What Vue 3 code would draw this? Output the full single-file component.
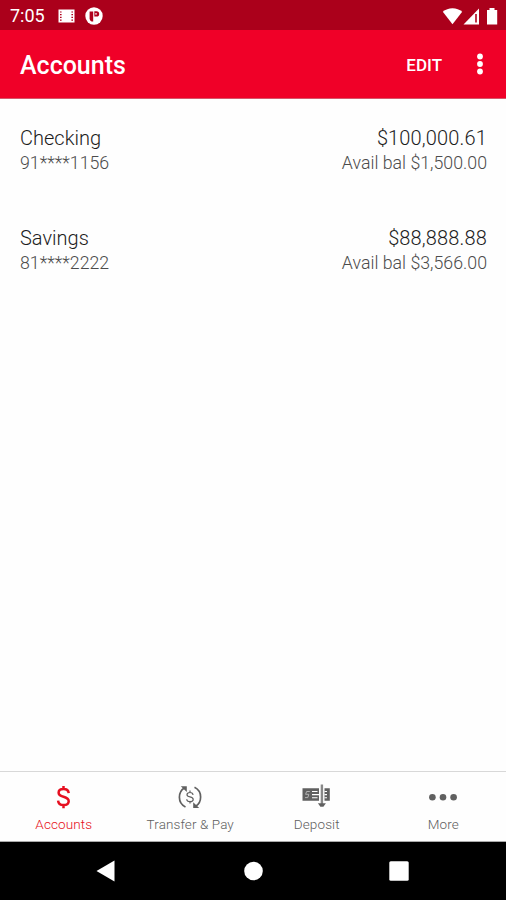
<script setup>
const accounts = [
  { name: 'Checking', number: '91****1156', balance: '$100,000.61', available: '$1,500.00' },
  { name: 'Savings', number: '81****2222', balance: '$88,888.88', available: '$3,566.00' }
]
const tabs = [
  { id: 'accounts', label: 'Accounts', active: true },
  { id: 'transfer', label: 'Transfer & Pay' },
  { id: 'deposit', label: 'Deposit' },
  { id: 'more', label: 'More' }
]
</script>

<template>
  <div class="screen">
    <div class="status">
      <span class="clock">7:05</span>
      <svg class="film" width="17" height="14" viewBox="0 0 17 14">
        <rect x="0.5" y="0.5" width="16" height="13" fill="#fff" />
        <path d="M2 3h1.600M2 5.700h1.600M2 8.400h1.600M2 11.100h1.600M13.400 3h1.600M13.400 5.700h1.600M13.400 8.400h1.600M13.400 11.100h1.600" stroke="#b0001c" stroke-width="1.200" />
      </svg>
      <svg class="badge" width="18" height="18" viewBox="0 0 18 18">
        <circle cx="9" cy="9" r="8.700" fill="#fff" />
        <path d="M4.600 4.400h3.600v10.200H6.600c-1.300-.8-2-1.800-2-3.400z" fill="#b0001c" />
        <path d="M9.300 4.200h2.200a2.700 2.700 0 0 1 0 5.400H9.300z" fill="#b0001c" />
        <circle cx="11" cy="6.900" r=".8" fill="#fff" />
      </svg>
      <svg class="signals" width="58" height="18" viewBox="0 0 58 18">
        <path d="M10.500 17.200L0.800 4.700C3.400 2.400 6.800 1.200 10.500 1.200s7.100 1.200 9.700 3.500z" fill="#fff" />
        <path d="M37 1.500V17.400H21.500z" fill="#fff" />
        <path d="M34 7v8.500" stroke="#b0001c" stroke-width="1.600" />
        <path d="M45 3h2.500V1h5V3H55.200v14.400H45z" fill="#fff" />
      </svg>
    </div>

    <header class="appbar">
      <h1>Accounts</h1>
      <button class="edit">EDIT</button>
      <svg width="6" height="22" viewBox="0 0 6 22" fill="#fff">
        <circle cx="3" cy="3.500" r="2.900" /><circle cx="3" cy="11" r="2.900" /><circle cx="3" cy="18.500" r="2.900" />
      </svg>
    </header>

    <main class="list">
      <section v-for="a in accounts" :key="a.name" class="account">
        <div class="line primary">
          <span class="name">{{ a.name }}</span>
          <span class="balance">{{ a.balance }}</span>
        </div>
        <div class="line secondary">
          <span class="number">{{ a.number }}</span>
          <span class="avail">Avail bal {{ a.available }}</span>
        </div>
      </section>
    </main>

    <nav class="tabs">
      <div v-for="t in tabs" :key="t.id" :class="['tab', { active: t.active }]">
        <svg v-if="t.id === 'accounts'" width="28" height="28" viewBox="0 0 28 28" fill="none" stroke="currentColor" stroke-width="2.500">
          <path d="M19.700 10.200C19.500 7.500 17.500 6 14.500 6s-4.900 1.500-4.900 3.700c0 2.400 2 3.300 4.900 4.100 3.100.9 5.200 2 5.200 4.500 0 2.300-2.100 3.800-5.100 3.800s-5.300-1.600-5.500-4.500M14.500 3v3.200M14.500 22v3.200" />
        </svg>
        <svg v-else-if="t.id === 'transfer'" width="28" height="28" viewBox="0 0 28 28" fill="none" stroke="currentColor" stroke-width="1.700">
          <path d="M9.500 24C5.500 22 3.400 18.500 3.400 14.300c0-4 1.800-7.400 4.900-9.300M18.500 4.200c4 2 6.100 5.500 6.100 9.700 0 4-1.800 7.400-4.900 9.300" />
          <path d="M4.800 3.200h6v5.800zM23.200 25h-6v-5.800z" fill="currentColor" stroke="none" />
          <path d="M17.100 11.900c-.2-1.500-1.300-2.400-3.100-2.400s-3 .9-3 2.200c0 1.400 1.400 1.800 3 2.200 1.800.5 3.200 1 3.200 2.500 0 1.400-1.300 2.200-3.200 2.200s-3.200-.8-3.300-2.400M14 7.500v2M14 18.500v2" stroke-width="1.200" />
        </svg>
        <svg v-else-if="t.id === 'deposit'" width="28" height="28" viewBox="0 0 28 28">
          <path d="M0.500 5.300h16.500v12.500H0.500zM22.500 5.300h5.300v12.500h-5.300z" fill="currentColor" />
          <path d="M10 8.500h5.500M10 11.600h7M10 14.700h5.500M22.500 8.500h2.500M22.500 11.600h2.500M22.500 14.700h2.500" stroke="#fff" stroke-width="1.100" />
          <path d="M7.800 8.500H4.600l-1 2.800H6.800l-1 3.300H3" stroke="#bbb" stroke-width=".9" fill="none" />
          <path d="M19.900 1.500v20" stroke="#888" stroke-width="2.400" />
          <path d="M15.900 20.300h8l-2.500 3.400h-3z" fill="currentColor" />
        </svg>
        <svg v-else width="28" height="28" viewBox="0 0 28 28" fill="currentColor">
          <circle cx="3.400" cy="14.200" r="3.300" /><circle cx="14" cy="14.200" r="3.300" /><circle cx="24.600" cy="14.200" r="3.300" />
        </svg>
        <span class="label">{{ t.label }}</span>
      </div>
    </nav>

    <div class="system">
      <svg width="20" height="22" viewBox="0 0 20 22"><path d="M0.500 11L18.500 0.600v20.800z" fill="#fff" /></svg>
      <svg width="20" height="20" viewBox="0 0 20 20"><circle cx="10.500" cy="10" r="9.300" fill="#fff" /></svg>
      <svg width="20" height="20" viewBox="0 0 20 20"><rect x=".3" y=".3" width="19.400" height="19.400" rx="1.500" fill="#fff" /></svg>
    </div>
  </div>
</template>

<style>
body { background: #fff; }
</style>

<style scoped>
.screen {
  display: flex;
  flex-direction: column;
  height: 900px;
  width: 506px;
  overflow: hidden;
  background: #fefefe;
  font-family: Roboto, sans-serif;
}
.status {
  display: flex;
  align-items: center;
  flex: none;
  height: 30px;
  padding: 1px 6px 0 10px;
  box-sizing: border-box;
  background: #ab001b;
  color: #fff;
}
.clock { width: 48px; font-size: 18px; line-height: 29px; }
.badge { margin-left: 9.500px; }
.signals { margin-left: auto; }
.appbar {
  display: flex;
  align-items: center;
  flex: none;
  height: 69px;
  padding: 0 23px 0 20px;
  box-sizing: border-box;
  border-bottom: 1px solid #d5566b;
  background: #f00028;
  color: #fff;
}
h1 { margin: 4px auto 0 0; font-size: 25px; font-weight: 500; line-height: 32px; }
.edit {
  margin: 2px 35px 0 0;
  padding: 0;
  border: 0;
  background: none;
  color: inherit;
  font: 500 17px/24px Roboto, sans-serif;
}
.list { flex: 1; padding: 26px 19px 0 20px; }
.account { height: 100px; }
.line { display: flex; justify-content: space-between; }
.primary { height: 25px; font-size: 20px; line-height: 26px; color: #1c1c1c; }
.secondary { height: 24px; font-size: 17.750px; line-height: 26px; color: #4c4c4c; }
.name, .balance, .number, .avail { font-weight: 300; white-space: nowrap; }
.balance { letter-spacing: 0.150px; }
.tabs {
  display: grid;
  grid-template-columns: repeat(4, 1fr);
  flex: none;
  height: 71px;
  box-sizing: border-box;
  border-top: 1px solid #d8d8d8;
  border-bottom: 1px solid #aaa;
}
.tab { display: flex; flex-direction: column; align-items: center; padding-top: 11px; color: #606060; }
.tab.active { color: #e60f20; }
.label { margin-top: 4px; padding-left: 1px; font-size: 13.500px; font-weight: 300; line-height: 18px; letter-spacing: 0.100px; white-space: nowrap; }
.system {
  display: flex;
  align-items: center;
  justify-content: space-between;
  flex: none;
  height: 58px;
  padding: 0 97px 0 96px;
  box-sizing: border-box;
  background: #000;
}
</style>
